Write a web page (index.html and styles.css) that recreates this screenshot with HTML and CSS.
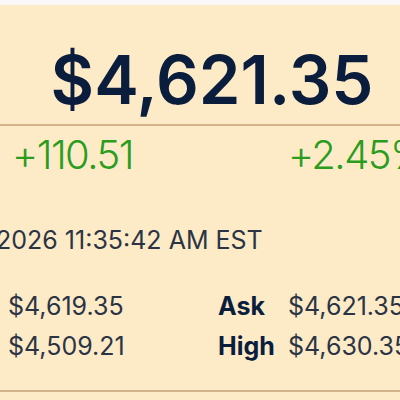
FILE: index.html
```html
<!DOCTYPE html>
<html lang="en">
<head>
<meta charset="utf-8">
<title>Gold Spot Price</title>
<link rel="stylesheet" href="styles.css">
</head>
<body>
  <div class="topbar"></div>
  <main class="card">
    <section class="price-block">
      <div class="price">$4,621.35</div>
    </section>
    <section class="change">
      <span class="chg">+110.51</span>
      <span class="chg">+2.45%</span>
    </section>
    <div class="updated">Jan 15, 2026 11:35:42 AM EST</div>
    <section class="stats">
      <span class="label">Bid</span><span class="val">$4,619.35</span>
      <span class="label">Ask</span><span class="val">$4,621.35</span>
      <span class="label">Low</span><span class="val">$4,509.21</span>
      <span class="label">High</span><span class="val">$4,630.35</span>
    </section>
  </main>
</body>
</html>
```

FILE: styles.css
```css
html, body {
  margin: 0;
  padding: 0;
}
body {
  background: #fdebc8;
  font-family: "Inter", "Liberation Sans", sans-serif;
  overflow: hidden;
  width: 400px;
  height: 400px;
}
.topbar {
  height: 5px;
  background: #f8f8f8;
}
.card {
  margin-left: -79px;
  width: 582px;
}
.price-block {
  padding: 35px 0 4px;
  border-bottom: 2px solid #d2b48a;
  text-align: center;
}
.price {
  font-size: 67px;
  font-weight: 600;
  line-height: 1.2;
  color: #0b1d3d;
}
.change {
  display: grid;
  grid-template-columns: 276px auto;
  padding: 5px 0 0 91px;
}
.chg {
  font-size: 40px;
  font-weight: 300;
  line-height: 1.2;
  color: #2a9d1e;
  letter-spacing: -1.5px;
}
.updated {
  margin-top: 46px;
  text-indent: -14px;
  font-size: 25px;
  line-height: 1.2;
  color: #2b3444;
  white-space: nowrap;
}
.stats {
  display: grid;
  grid-template-columns: 71px 210px 70px auto;
  row-gap: 10px;
  margin-top: 36px;
  padding: 0 0 29px 16px;
  border-bottom: 2px solid #d2b48a;
  font-size: 25px;
  line-height: 1.2;
}
.label {
  font-weight: 700;
  color: #0b1d3d;
}
.val {
  color: #2b3444;
}
```
